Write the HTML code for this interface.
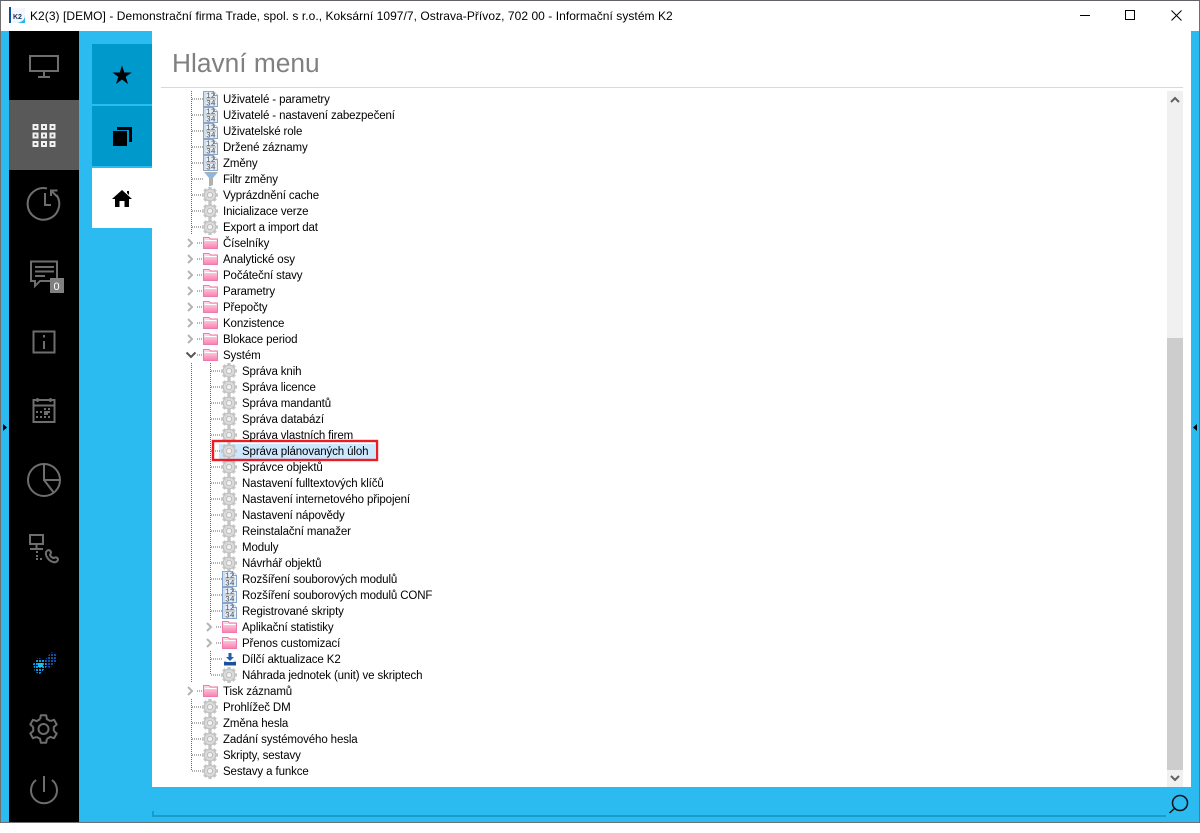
<!DOCTYPE html>
<html><head><meta charset="utf-8"><title>K2</title>
<style>
html,body{margin:0;padding:0;background:#fff;width:1200px;height:833px;overflow:hidden}
svg{position:absolute;left:0;top:0;display:block}
.t{font:11.5px "Liberation Sans","DejaVu Sans",sans-serif;letter-spacing:-.12px;fill:#000}
</style></head><body>
<svg width="1200" height="833" viewBox="0 0 1200 833" xmlns="http://www.w3.org/2000/svg">
<defs>
<g id="n"><path d="M.5-7.500H10.500L14.500-3.500V7.500H.5Z" fill="#e6eef8" stroke="#86a5cb"/><path d="M10.500-7.500V-3.500H14.500" fill="#fff" stroke="#86a5cb"/><path d="M2-6.500V6.500" stroke="#b5cae3"/><text x="3" y="-1" font-family="Liberation Mono" font-size="8" fill="#5c5c5c">12</text><text x="3" y="6.500" font-family="Liberation Mono" font-size="8" fill="#4a4a4a">34</text><path d="M3 0H13" stroke="#8a8a8a" stroke-width=".7"/></g>
<g id="g"><path d="M6.300-8H9.700V8H6.300Z" fill="#c6c6c6"/><path d="M6.300-8H9.700V8H6.300Z" fill="#c6c6c6" transform="rotate(45 8 0)"/><path d="M6.300-8H9.700V8H6.300Z" fill="#c6c6c6" transform="rotate(90 8 0)"/><path d="M6.300-8H9.700V8H6.300Z" fill="#c6c6c6" transform="rotate(135 8 0)"/><circle cx="8" cy="0" r="5.900" fill="#dadada" stroke="#bdbdbd"/><circle cx="8" cy="0" r="2.600" fill="#f2f2f2" stroke="#b4b4b4" stroke-width=".8"/></g>
<linearGradient id="fg" x1="0" y1="0" x2="0" y2="1"><stop offset="0" stop-color="#ffe3ee"/><stop offset="1" stop-color="#f77fb0"/></linearGradient>
<g id="f"><path d="M.5-5.500H6L7.500-4H14.500V5.500H.5Z" fill="url(#fg)" stroke="#ef7aa9"/><path d="M1.500-2.500H13.500" stroke="#fff"/></g>
<g id="v"><path d="M1-7H15L10-1V6L6 7.500V-1Z" fill="#b0b0b0"/><path d="M2-6H14L9.500-1.500H6.500Z" fill="#85b9e8"/></g>
<g id="d"><path d="M6.500-6H9.500V-2H12L8 2 4-2H6.500Z" fill="#1f5fae"/><path d="M2 3H14V6.500H2Z" fill="#1c4f9c"/><path d="M2 1.800H4.500V3H2ZM11.500 1.800H14V3H11.500Z" fill="#c4c4c4"/></g>
<path id="c" d="M0-4 4 0 0 4" fill="none" stroke="#b4b4b4" stroke-width="2"/>
<g id="s6"><path d="M-3.400-9.900-2.700-13.700H2.700L3.400-9.900 6.900-7.900" fill="none" stroke="#6e6e6e" stroke-width="2" stroke-linejoin="round"/></g>
<pattern id="dith" width="3" height="3" patternUnits="userSpaceOnUse"><rect width="2" height="2" fill="#fff"/></pattern>
<mask id="dm"><rect x="30" y="650" width="30" height="28" fill="url(#dith)"/></mask>
</defs>

<rect x="0" y="0" width="1200" height="1" fill="#5f6368"/>
<rect x="0" y="1" width="1200" height="30" fill="#fff"/>
<rect x="1" y="31" width="1198" height="791" fill="#2cbbf0"/>
<rect x="0" y="1" width="1" height="821" fill="#6f6f6f"/>
<rect x="1199" y="1" width="1" height="821" fill="#6f6f6f"/>
<rect x="0" y="822" width="1200" height="1" fill="#6f6f6f"/>

<rect x="9" y="7" width="2" height="16" fill="#0a4fa0"/>
<rect x="12" y="8" width="13" height="15" fill="#f3f6fa"/>
<text x="13" y="19" font-family="Liberation Sans" font-size="7" font-weight="bold" fill="#12305f">K2</text>
<path d="M17 23C22 22 25 20 25 15V23Z" fill="#22b5ee"/>
<text x="30" y="20" font-family="Liberation Sans" font-size="12" letter-spacing=".05" fill="#000">K2(3) [DEMO] - Demonstrační firma Trade, spol. s r.o., Koksární 1097/7, Ostrava-Přívoz, 702 00 - Informační systém K2</text>
<path d="M1080 15.500H1090" stroke="#000"/>
<rect x="1125.500" y="10.500" width="9" height="9" fill="none" stroke="#000"/>
<path d="M1171.500 10.500 1181.500 20.500M1181.500 10.500 1171.500 20.500" stroke="#000" fill="none"/>

<rect x="9" y="31" width="70" height="791" fill="#000"/>
<rect x="9" y="100" width="70" height="70" fill="#595959"/>
<g fill="none" stroke="#6e6e6e" stroke-width="2">
<rect x="30" y="56" width="28" height="15"/><path d="M44 71V76M38 77H50"/>
<path d="M56.500 195A15.800 15.800 0 1 1 47 188.500"/>
<path d="M45 193V205H51"/><path d="M51 196V190.500H57.500M51 190.500 57 196.500"/>
<path d="M31 261.500H57V281H40L35 286V281H31Z"/><path d="M35 267H54M35 271.500H54M35 276H45"/>
<rect x="33.500" y="331.500" width="21" height="21"/><path d="M44 341V349M44 335V337.500"/>
<rect x="33.500" y="400" width="21" height="22"/><path d="M33.500 405.500H54.500M37.500 398V402M50.500 398V402"/>
<circle cx="44" cy="480" r="16"/><path d="M44 464V480H60M44 480 54 493"/>
<rect x="30" y="535" width="13" height="9"/><path d="M36.500 544V548M30 549H43"/>
<path d="M36 780A13 13 0 1 0 52 780M44 776V792"/>
<circle cx="43.500" cy="729" r="5"/>
</g>
<path fill-rule="evenodd" fill="#f0f0f0" d="M32.500 124h6v6h-6zM34.500 126v2h2v-2zM41 124h6v6h-6zM43 126v2h2v-2zM49.500 124h6v6h-6zM51.500 126v2h2v-2zM32.500 132.500h6v6h-6zM34.500 134.500v2h2v-2zM41 132.500h6v6h-6zM43 134.500v2h2v-2zM49.500 132.500h6v6h-6zM51.500 134.500v2h2v-2zM32.500 141h6v6h-6zM34.500 143v2h2v-2zM41 141h6v6h-6zM43 143v2h2v-2zM49.500 141h6v6h-6zM51.500 143v2h2v-2z"/>
<g fill="#6e6e6e"><rect x="36" y="411" width="2" height="2"/><rect x="40" y="411" width="2" height="2"/><rect x="48" y="408" width="2" height="2"/><rect x="44" y="408" width="2" height="2"/><rect x="36" y="416" width="2" height="2"/><rect x="40" y="416" width="2" height="2"/><rect x="44" y="411" width="4" height="4"/><rect x="48" y="411" width="2" height="2"/><rect x="44" y="416" width="2" height="2"/><rect x="48" y="416" width="2" height="2"/><rect x="36" y="551" width="2" height="2"/><rect x="36" y="555" width="2" height="2"/><rect x="36" y="558" width="2" height="2"/><rect x="40" y="558" width="2" height="2"/></g>
<path d="M46 552C48 549 50 550 51 552 51 554 50 554 50 555 51 557 52 558 54 558 55 557 57 557 58 559 58 561 56 563 53 562 49 561 45 556 46 552Z" fill="none" stroke="#6e6e6e" stroke-width="2"/>
<rect x="50" y="278" width="14" height="15" fill="#808080"/>
<text x="53.500" y="290" font-family="Liberation Sans" font-size="11" fill="#fff">0</text>
<g transform="translate(43.500 729)"><use href="#s6"/><use href="#s6" transform="rotate(60)"/><use href="#s6" transform="rotate(120)"/><use href="#s6" transform="rotate(180)"/><use href="#s6" transform="rotate(240)"/><use href="#s6" transform="rotate(300)"/></g>
<g mask="url(#dm)">
<path d="M51 652 56 654 56 662 50 668 45 666 45 660Z" fill="#0b4fa8"/>
<path d="M38 658 45 660 47 666 40 674 35 672 33 664Z" fill="#0a9be8"/>
</g>
<rect x="38" y="663" width="5" height="4" fill="#16c0f5"/>
<path d="M3 424V431L7 427.500Z" fill="#000"/>
<path d="M1197 424V431L1193 427.500Z" fill="#000"/>

<rect x="92" y="44" width="60" height="60" fill="#0099cc"/>
<rect x="92" y="106" width="60" height="60" fill="#0099cc"/>
<rect x="92" y="168" width="60" height="60" fill="#fff"/>
<path d="M122 65.500 124.300 72.500H131.700L125.700 76.800 128 84 122 79.500 116 84 118.300 76.800 112.300 72.500H119.700Z" fill="#000"/>
<rect x="113" y="131" width="14" height="15" fill="#000"/>
<path d="M117 129V127H132V142H129V130H117Z" fill="#000"/>
<path d="M122 190 132 199H129V207H124.500V201H119.500V207H115V199H112Z" fill="#000"/>
<path d="M127 191H129V195L127 193Z" fill="#000"/>

<rect x="152" y="31" width="1039" height="756" fill="#fff"/>
<text x="172" y="72" font-family="Liberation Sans" font-size="26.300" fill="#808080">Hlavní menu</text>
<rect x="161" y="87" width="1022" height="1" fill="#d9d9d9"/>

<rect x="1167" y="91" width="16" height="696" fill="#f0f0f0"/>
<rect x="1167" y="338" width="16" height="432" fill="#cdcdcd"/>
<path d="M1171 102 1175 98 1179 102" fill="none" stroke="#606060" stroke-width="2"/>
<path d="M1171 776 1175 780 1179 776" fill="none" stroke="#606060" stroke-width="2"/>

<rect x="152" y="811" width="2" height="6" fill="#1a9bc9"/>
<rect x="152" y="815" width="1014" height="2" fill="#1a9bc9"/>
<circle cx="1180" cy="803" r="7.500" fill="none" stroke="#111" stroke-width="1.500"/>
<path d="M1175 808 1169.500 813" stroke="#111" stroke-width="1.500"/>

<rect x="219" y="444" width="156" height="15" fill="#cce8ff"/>

<g fill="none" stroke="#666" stroke-dasharray="1 1">
<path d="M191.500 91V235M191.500 363V683M191.500 699V771M210.500 363V621M210.500 651V675"/>
<path d="M192 99H203M192 115H203M192 131H203M192 147H203M192 163H203M192 179H203M192 195H203M192 211H203M192 227H203M197 243H203M197 259H203M197 275H203M197 291H203M197 307H203M197 323H203M197 339H203M197 355H203M197 691H203M192 707H203M192 723H203M192 739H203M192 755H203M192 771H203"/>
<path d="M211 371H222M211 387H222M211 403H222M211 419H222M211 435H222M211 451H222M211 467H222M211 483H222M211 499H222M211 515H222M211 531H222M211 547H222M211 563H222M211 579H222M211 595H222M211 611H222M216 627H222M216 643H222M211 659H222M211 675H222"/>
</g>

<use href="#c" x="188" y="243"/><use href="#c" x="188" y="259"/><use href="#c" x="188" y="275"/><use href="#c" x="188" y="291"/><use href="#c" x="188" y="307"/><use href="#c" x="188" y="323"/><use href="#c" x="188" y="339"/><use href="#c" x="188" y="691"/><use href="#c" x="207" y="627"/><use href="#c" x="207" y="643"/>
<path d="M186.500 352.500 191 357 195.500 352.500" fill="none" stroke="#555" stroke-width="2"/>

<use href="#n" x="203" y="99"/><use href="#n" x="203" y="115"/><use href="#n" x="203" y="131"/><use href="#n" x="203" y="147"/><use href="#n" x="203" y="163"/>
<use href="#v" x="203" y="179"/>
<use href="#g" x="202" y="195"/><use href="#g" x="202" y="211"/><use href="#g" x="202" y="227"/>
<use href="#f" x="203" y="243"/><use href="#f" x="203" y="259"/><use href="#f" x="203" y="275"/><use href="#f" x="203" y="291"/><use href="#f" x="203" y="307"/><use href="#f" x="203" y="323"/><use href="#f" x="203" y="339"/><use href="#f" x="203" y="355"/>
<use href="#g" x="221" y="371"/><use href="#g" x="221" y="387"/><use href="#g" x="221" y="403"/><use href="#g" x="221" y="419"/><use href="#g" x="221" y="435"/><use href="#g" x="221" y="451"/><use href="#g" x="221" y="467"/><use href="#g" x="221" y="483"/><use href="#g" x="221" y="499"/><use href="#g" x="221" y="515"/><use href="#g" x="221" y="531"/><use href="#g" x="221" y="547"/><use href="#g" x="221" y="563"/>
<use href="#n" x="222" y="579"/><use href="#n" x="222" y="595"/><use href="#n" x="222" y="611"/>
<use href="#f" x="222" y="627"/><use href="#f" x="222" y="643"/>
<use href="#d" x="222" y="659"/><use href="#g" x="221" y="675"/>
<use href="#f" x="203" y="691"/>
<use href="#g" x="202" y="707"/><use href="#g" x="202" y="723"/><use href="#g" x="202" y="739"/><use href="#g" x="202" y="755"/><use href="#g" x="202" y="771"/>

<rect x="213" y="441" width="164" height="19" fill="none" stroke="#ed1c24" stroke-width="2.400"/>

<g class="t">
<text x="223" y="103">Uživatelé - parametry</text>
<text x="223" y="119">Uživatelé - nastavení zabezpečení</text>
<text x="223" y="135">Uživatelské role</text>
<text x="223" y="151">Držené záznamy</text>
<text x="223" y="167">Změny</text>
<text x="223" y="183">Filtr změny</text>
<text x="223" y="199">Vyprázdnění cache</text>
<text x="223" y="215">Inicializace verze</text>
<text x="223" y="231">Export a import dat</text>
<text x="223" y="247">Číselníky</text>
<text x="223" y="263">Analytické osy</text>
<text x="223" y="279">Počáteční stavy</text>
<text x="223" y="295">Parametry</text>
<text x="223" y="311">Přepočty</text>
<text x="223" y="327">Konzistence</text>
<text x="223" y="343">Blokace period</text>
<text x="223" y="359">Systém</text>
<text x="242" y="375">Správa knih</text>
<text x="242" y="391">Správa licence</text>
<text x="242" y="407">Správa mandantů</text>
<text x="242" y="423">Správa databází</text>
<text x="242" y="439">Správa vlastních firem</text>
<text x="242" y="455">Správa plánovaných úloh</text>
<text x="242" y="471">Správce objektů</text>
<text x="242" y="487">Nastavení fulltextových klíčů</text>
<text x="242" y="503">Nastavení internetového připojení</text>
<text x="242" y="519">Nastavení nápovědy</text>
<text x="242" y="535">Reinstalační manažer</text>
<text x="242" y="551">Moduly</text>
<text x="242" y="567">Návrhář objektů</text>
<text x="242" y="583">Rozšíření souborových modulů</text>
<text x="242" y="599">Rozšíření souborových modulů CONF</text>
<text x="242" y="615">Registrované skripty</text>
<text x="242" y="631">Aplikační statistiky</text>
<text x="242" y="647">Přenos customizací</text>
<text x="242" y="663">Dílčí aktualizace K2</text>
<text x="242" y="679">Náhrada jednotek (unit) ve skriptech</text>
<text x="223" y="695">Tisk záznamů</text>
<text x="223" y="711">Prohlížeč DM</text>
<text x="223" y="727">Změna hesla</text>
<text x="223" y="743">Zadání systémového hesla</text>
<text x="223" y="759">Skripty, sestavy</text>
<text x="223" y="775">Sestavy a funkce</text>
</g>
</svg>
</body></html>
